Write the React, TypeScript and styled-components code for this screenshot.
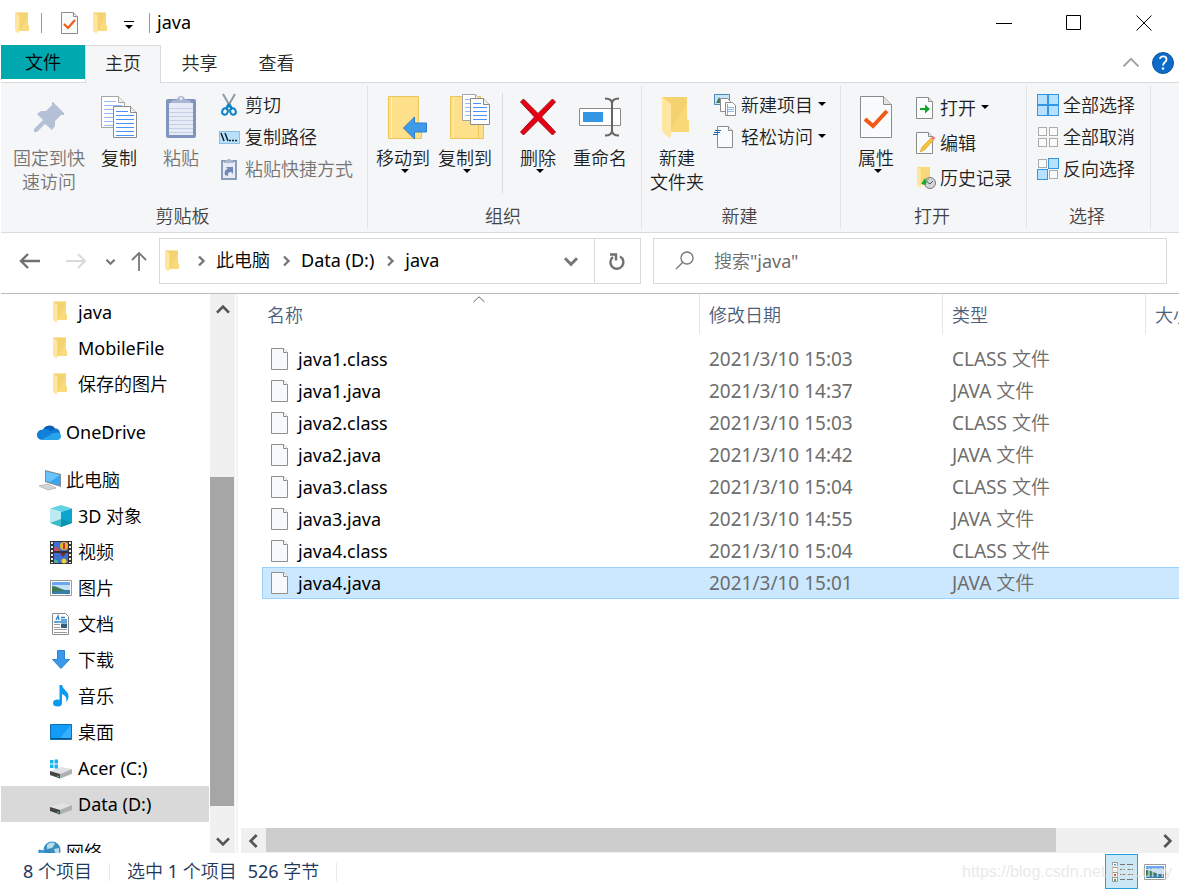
import React from "react";
import styled, { createGlobalStyle, css } from "styled-components";

const Global = createGlobalStyle`
  * { box-sizing: border-box; }
  body {
    margin: 0;
    background: #fff;
    color: #000;
    font: 400 18px/24px "Noto Sans", "Noto Sans CJK SC DemiLight", "Noto Sans CJK SC Light", "Noto Sans CJK SC", sans-serif;
  }
  button, input { font: inherit; color: inherit; }
  svg { display: block; flex: none; }
`;

const Window = styled.div`
  height: 100vh;
  display: flex;
  flex-direction: column;
  overflow: hidden;
  padding: 0 1px;
  position: relative;
`;

const PlainButton = styled.button`
  border: 0;
  padding: 0;
  margin: 0;
  background: none;
  display: flex;
  align-items: center;
  justify-content: center;
`;

/* ---------- title bar ---------- */
const TitleBar = styled.header`
  height: 45px;
  flex: none;
  display: flex;
  align-items: center;
  padding-left: 10px;
`;
const QuickButton = styled(PlainButton)<{ $w: number }>`
  width: ${(p) => p.$w}px;
  height: 32px;
`;
const TitleRule = styled.span<{ $left: number; $right: number }>`
  width: 1px;
  height: 20px;
  background: #9a9a9a;
  margin: 0 ${(p) => p.$right}px 0 ${(p) => p.$left}px;
`;
const Title = styled.h1`
  margin: 0;
  padding-bottom: 2px;
  flex: 1;
  font-size: 18px;
  line-height: 24px;
  font-weight: 400;
`;
const CaptionButton = styled(PlainButton)`
  width: 70px;
  height: 45px;
`;

/* ---------- tabs ---------- */
const TabBar = styled.nav`
  height: 38px;
  flex: none;
  display: flex;
  align-items: flex-start;
  border-bottom: 1px solid #dadbdc;
`;
const Tab = styled(PlainButton)<{ $kind?: "file" | "active" }>`
  width: 77px;
  height: 37px;
  padding-bottom: 2px;
  color: #262626;
  ${(p) =>
    p.$kind === "file" &&
    css`
      width: 84px;
      height: 34px;
      padding-bottom: 0;
      background: #00a8b0;
      color: #000;
    `}
  ${(p) =>
    p.$kind === "active" &&
    css`
      width: 76px;
      height: 38px;
      padding-bottom: 4px;
      background: #f5f6f7;
      border: 1px solid #dadbdc;
      border-bottom: 0;
    `}
`;
const TabSpace = styled.div`
  flex: 1;
`;
const TabIcon = styled(PlainButton)`
  width: 32px;
  height: 36px;
`;

/* ---------- ribbon ---------- */
const Ribbon = styled.section`
  height: 150px;
  flex: none;
  display: flex;
  background: #f5f6f7;
  border-bottom: 1px solid #dadbdc;
  padding: 3px 0;
`;
const Group = styled.div<{ $w: number }>`
  width: ${(p) => p.$w}px;
  flex: none;
  display: flex;
  flex-direction: column;
  justify-content: space-between;
  border-right: 1px solid #e2e3e4;
`;
const GroupBody = styled.div<{ $pad?: number }>`
  display: flex;
  align-items: flex-start;
  padding-left: ${(p) => p.$pad ?? 3}px;
`;
const GroupLabel = styled.div`
  text-align: center;
  color: #444;
  padding: 0 3px 1px 0;
`;
const BigButton = styled(PlainButton)<{ $w: number }>`
  width: ${(p) => p.$w}px;
  padding-top: 8px;
  flex-direction: column;
  justify-content: flex-start;
  color: #1e1e1e;
  white-space: nowrap;
  &:disabled { color: #757575; }
`;
const BigIcon = styled.span`
  height: 52px;
  padding-bottom: 6px;
  display: flex;
  align-items: center;
`;
const MenuMark = styled.span`
  padding-left: 4px;
  margin-top: -1px;
`;
const SmallList = styled.div<{ $left?: number; $top?: number }>`
  display: flex;
  flex-direction: column;
  align-items: flex-start;
  padding-top: ${(p) => p.$top ?? 3}px;
  margin-left: ${(p) => p.$left ?? 4}px;
`;
const SmallButton = styled(PlainButton)<{ $h?: number }>`
  height: ${(p) => p.$h ?? 32}px;
  gap: 4px;
  color: #1e1e1e;
  white-space: nowrap;
  &:disabled { color: #757575; }
`;
const Divider = styled.span`
  width: 1px;
  height: 100px;
  margin: 7px 6px 0;
  background: #dadbdc;
`;

/* ---------- address row ---------- */
const NavRow = styled.div`
  height: 61px;
  flex: none;
  display: grid;
  grid-template-columns: 157px 15fr 12px 16fr;
  padding: 5px 12px 9px 1px;
  border-bottom: 1px solid #bcbcbc;
`;
const NavButtons = styled.div`
  display: flex;
  align-items: center;
  padding-left: 8px;
`;
const NavButton = styled(PlainButton)<{ $w: number }>`
  width: ${(p) => p.$w}px;
  height: 46px;
`;
const Address = styled.div`
  display: flex;
  align-items: center;
  border: 1px solid #d9d9d9;
  height: 46px;
  padding-left: 1px;
`;
const Crumb = styled.a`
  color: #000;
  padding-bottom: 2px;
  text-decoration: none;
  white-space: nowrap;
`;
const CrumbGap = styled.span`
  width: 31px;
  display: flex;
  justify-content: center;
`;
const Stretch = styled.span`
  flex: 1;
`;
const BoxButton = styled(PlainButton)<{ $line?: boolean }>`
  width: 46px;
  height: 44px;
  border-left: ${(p) => (p.$line ? "1px solid #d9d9d9" : "0")};
`;
const SearchBox = styled.label`
  grid-column: 4;
  display: flex;
  align-items: center;
  border: 1px solid #d9d9d9;
  height: 46px;
  padding-left: 20px;
  gap: 18px;
`;
const SearchInput = styled.input`
  border: 0;
  outline: 0;
  padding: 0;
  flex: 1;
  min-width: 0;
  background: none;
  &::placeholder { color: #6d6d6d; opacity: 1; }
`;

/* ---------- body ---------- */
const Body = styled.div`
  flex: 1;
  min-height: 0;
  display: flex;
`;
const Sidebar = styled.nav`
  width: 208px;
  flex: none;
  overflow: hidden;
`;
const TreeGroup = styled.ul`
  list-style: none;
  margin: 0 0 12px;
  padding: 0;
`;
const TreeItem = styled.a<{ $level: number; $active?: boolean }>`
  height: 36px;
  display: flex;
  align-items: center;
  gap: 5px;
  padding-left: ${(p) => 24 + p.$level * 12}px;
  background: ${(p) => (p.$active ? "#d9d9d9" : "transparent")};
  color: #000;
  text-decoration: none;
  white-space: nowrap;
`;
const ScrollV = styled.div`
  width: 25px;
  margin-left: 1px;
  padding-top: 3px;
  flex: none;
  display: flex;
  flex-direction: column;
  background: #f0f0f0;
`;
const ScrollButton = styled(PlainButton)`
  width: 25px;
  height: 25px;
  flex: none;
`;
const TrackV = styled.div`
  flex: 1;
  display: flex;
  flex-direction: column;
  justify-content: flex-end;
  margin-bottom: 22px;
`;
const ThumbV = styled.div`
  height: 68%;
  width: 24px;
  background: #a6a6a6;
`;
const Main = styled.main`
  flex: 1;
  min-width: 0;
  display: flex;
  flex-direction: column;
  border-left: 2px solid #f4f4f4;
  margin-left: 1px;
`;
const ListArea = styled.div`
  flex: 1;
  overflow: hidden;
  padding-left: 24px;
`;
const FileTable = styled.table`
  table-layout: fixed;
  width: 1120px;
  border-collapse: separate;
  border-spacing: 0;
  th { font-weight: 400; text-align: left; }
  tbody::before { content: ""; display: block; height: 9px; }
`;
const HeadCell = styled.th`
  height: 40px;
  padding: 2px 0 0 9px;
  color: #4c607a;
  border-left: 1px solid #e5e5e5;
  position: relative;
  &:first-child { border-left: 0; padding-left: 5px; }
`;
const SortMark = styled.span`
  position: absolute;
  top: 2px;
  left: 211px;
`;
const FileRow = styled.tr<{ $selected?: boolean }>`
  ${(p) =>
    p.$selected &&
    css`
      background: #cce8ff;
      outline: 1px solid #99d1ff;
      outline-offset: -1px;
    `}
`;
const NameCell = styled.td`
  height: 32px;
  padding: 0 0 0 9px;
`;
const FileName = styled.span`
  display: flex;
  align-items: center;
  gap: 9px;
`;
const InfoCell = styled.td`
  height: 32px;
  padding: 0 0 0 10px;
  color: #6d6d6d;
  font-size: 19px;
`;
const ScrollH = styled.div`
  height: 25px;
  flex: none;
  margin-left: 3px;
  display: flex;
  background: #f0f0f0;
`;
const TrackH = styled.div`
  flex: 1;
`;
const ThumbH = styled.div`
  width: 89%;
  height: 24px;
  background: #cdcdcd;
`;

/* ---------- status bar ---------- */
const StatusBar = styled.footer`
  height: 37px;
  flex: none;
  display: flex;
  align-items: center;
  padding-left: 22px;
  padding-right: 8px;
  color: #1e395b;
`;
const StatusRule = styled.span`
  width: 1px;
  height: 18px;
  margin: 0 17px;
  background: #e8e8e8;
`;
const StatusText = styled.span<{ $gap?: number }>`
  margin-right: ${(p) => p.$gap ?? 0}px;
  padding-bottom: 2px;
`;
const ViewButton = styled(PlainButton)<{ $active?: boolean }>`
  width: 33px;
  height: 35px;
  border: 1px solid ${(p) => (p.$active ? "#26a0da" : "transparent")};
  background: ${(p) => (p.$active ? "#cbe8f6" : "none")};
`;
const Watermark = styled.span`
  position: absolute;
  right: 8px;
  bottom: 8px;
  font: 16px/20px "Liberation Sans", Arial, sans-serif;
  color: rgba(228, 228, 228, 0.8);
  pointer-events: none;
`;

/* ---------- drawings ---------- */
const Folder = () => (
  <svg width="24" height="24" viewBox="0 0 24 24">
    <path d="M4 1.500h13v12l1 1.500v5H8z" fill="#f9da7c" />
    <path d="M5 1.500h12v2L9 20H8z" fill="#eecb68" opacity=".5" />
    <path d="M4 1.500l4.500 3v16.500L7 22.500l-3-3z" fill="#ffe69b" />
  </svg>
);
const Down = () => (
  <svg width="8" height="4" viewBox="0 0 8 4"><path d="M0 0h8L4 4z" fill="#000" /></svg>
);
const DownSmall = () => (
  <svg width="12" height="12" viewBox="0 0 12 12"><path d="M1 3h8L5 7z" fill="#000" /></svg>
);
const Page = ({ children }: { children?: React.ReactNode }) => (
  <svg width="22" height="24" viewBox="0 0 22 24">
    <path d="M2.500 1.500h12l4 4v17h-16z" fill="#fafbfc" stroke="#8c8c8c" />
    <path d="M14.500 1.500v4h4" fill="#e8e8e8" stroke="#8c8c8c" />
    {children}
  </svg>
);
const FilePage = () => (
  <svg width="18" height="22" viewBox="0 0 18 22">
    <path d="M.5.500h12l4 4v17H.5z" fill="#f8f9fa" stroke="#8f8f8f" />
    <path d="M12.500.500v4h4" fill="#fff" stroke="#8f8f8f" />
  </svg>
);
const Chevron = ({ dir = "right", size = 12, color = "#555", sw = 2 }: { dir?: string; size?: number; color?: string; sw?: number }) => {
  const d: Record<string, string> = {
    right: "M4 1.500l4.500 4.500L4 10.500",
    left: "M8 1.500L3.500 6L8 10.500",
    down: "M1.500 4L6 8.500L10.500 4",
    up: "M1.500 8L6 3.500L10.500 8",
  };
  return (
    <svg width={size} height={size} viewBox="0 0 12 12">
      <path d={d[dir]} fill="none" stroke={color} strokeWidth={sw} />
    </svg>
  );
};
const Pin = () => (
  <svg width="32" height="34" viewBox="0 0 32 34">
    <path d="M20 2l11 11v2h-3l-6 6v5l-3 4-7-6L4 32H1v-3l9-9-6-6 4-3h5l6-6V2z" fill="#b3c0d6" />
  </svg>
);
const lines = (x: number, y: number, w: number, n: number, step = 4) =>
  Array.from({ length: n }, (_, i) => <path key={i} d={`M${x} ${y + i * step}h${w}`} stroke="#4a90ff" />);
const Sheet = ({ x, y, w, h, faint }: { x: number; y: number; w: number; h: number; faint?: boolean }) => (
  <g transform={`translate(${x} ${y})`}>
    <path d={`M.5.500h${w - 7}l6 6v${h - 7}H.5z`} fill="#fff" stroke={faint ? "#a5a5a5" : "#8a8a8a"} />
    <path d={`M${w - 6.5}.500v6h6`} fill="#eee" stroke={faint ? "#a5a5a5" : "#8a8a8a"} />
    <g opacity={faint ? 0.6 : 1}>
      {lines(3, 5.5, w - 12, 1)}
      {lines(3, 9.5, w - 6, Math.floor((h - 12) / 4) + 1)}
    </g>
  </g>
);
const Copy = () => (
  <svg width="38" height="44" viewBox="0 0 38 44">
    <Sheet x={1} y={1} w={24} h={32} faint />
    <Sheet x={13} y={11} w={24} h={32} />
  </svg>
);
const Paste = () => (
  <svg width="32" height="44" viewBox="0 0 32 44">
    <rect x="1" y="4" width="30" height="39" rx="2" fill="#8094bd" />
    <path d="M4 8h24v32H4z" fill="#e6ebf6" />
    {Array.from({ length: 7 }, (_, i) => <path key={i} d={`M4 ${13.5 + i * 4}h24`} stroke="#c5cfe5" />)}
    <path d="M6 8c0-4 5-2 6-4 1-4 7-4 8 0 1 2 6 0 6 4z" fill="#a9b7d3" />
    <circle cx="16" cy="3.500" r="1.500" fill="#e6ebf6" />
  </svg>
);
const Scissors = () => (
  <svg width="22" height="24" viewBox="0 0 22 24">
    <path d="M4 1l8 14M16 1L8 15" stroke="#8e9aa6" strokeWidth="2" />
    <path d="M10 11l-3 5M10 11l3 5" stroke="#0d84c9" strokeWidth="2.500" />
    <ellipse cx="6" cy="18.500" rx="2.800" ry="3.200" fill="none" stroke="#0d84c9" strokeWidth="2" transform="rotate(20 6 18.500)" />
    <ellipse cx="14" cy="18.500" rx="2.800" ry="3.200" fill="none" stroke="#0d84c9" strokeWidth="2" transform="rotate(-20 14 18.500)" />
  </svg>
);
const PathIcon = () => (
  <svg width="22" height="24" viewBox="0 0 22 24">
    <rect x=".5" y="6.500" width="20" height="12" fill="#b9e0fb" stroke="#8cbfe6" />
    <path d="M2 8l3 8M6 8l3 8" stroke="#123" strokeWidth="1.500" />
    <path d="M10 15.500h2M13 15.500h2M16 15.500h2" stroke="#123" strokeWidth="1.500" />
  </svg>
);
const PasteLink = () => (
  <svg width="22" height="24" viewBox="0 0 22 24">
    <rect x="3" y="4" width="14" height="18" fill="#e6ebf6" stroke="#8c9cbd" strokeWidth="2" />
    <path d="M5 6c0-3 3-2 4-4h2c1 2 4 1 4 4z" fill="#a9b7d3" />
    <path d="M6 18c-1-4 1-6 3-6l-2-2h7v7l-2-2c-3 0-3 2-3 4z" fill="#7288b5" />
  </svg>
);
const FolderBase = ({ children }: { children: React.ReactNode }) => (
  <svg width="52" height="46" viewBox="-10 0 52 46">
    <path d="M1.500 2.500h30v25l3 3v14h-33z" fill="#ffe08a" stroke="#e9c55b" />
    <path d="M4.500 3v41" stroke="#fff0bd" />
    {children}
  </svg>
);
const MoveTo = () => (
  <FolderBase>
    <path d="M16.500 34l11-11v6h12v9h-12v7z" fill="#3f9be8" stroke="#2b7fc9" />
  </FolderBase>
);
const CopyTo = () => (
  <FolderBase>
    <path d="M29.500 31v13" stroke="#e9c55b" />
    <Sheet x={13} y={0} w={20} h={27} faint />
    <Sheet x={21} y={4} w={20} h={27} />
  </FolderBase>
);
const Delete = () => (
  <svg width="38" height="40" viewBox="0 0 38 40">
    <path d="M1.500 5l3-3L19 16.500 33.500 2l3 3-14 15 14 15-3 3L19 23.500 4.500 38l-3-3 14-15z" fill="#e60012" stroke="#a01020" />
  </svg>
);
const Rename = () => (
  <svg width="44" height="40" viewBox="0 0 44 40">
    <path d="M1.500 11.500h41v17h-41z" fill="#fff" stroke="#8c8c8c" />
    <path d="M5 15h20v10H5z" fill="#3397e6" />
    <path d="M27 1.500c4 0 7 1 7 5v27c0 4-3 5-7 5M41 1.500c-4 0-7 1-7 5v27c0 4 3 5 7 5" fill="none" stroke="#666" strokeWidth="2" />
  </svg>
);
const BigFolder = () => (
  <svg width="36" height="46" viewBox="0 0 36 46">
    <path d="M3 3h25v22l2 2v11H11z" fill="#f9d877" />
    <path d="M3 3h25v6L11 38V9z" fill="#f1ce6c" opacity=".6" />
    <path d="M3 3l9 7v32l-2 2-7-7z" fill="#ffe6a0" />
  </svg>
);
const NewItem = () => (
  <svg width="24" height="24" viewBox="0 0 24 24">
    <path d="M1.500 1.500h15v10h-15z" fill="#c6e6f7" stroke="#4a8bb5" />
    <path d="M3 10l3-6 3 6z" fill="#4c7a55" />
    <path d="M7.500 5.500h7l3 3v10h-10z" fill="#fff" stroke="#8c8c8c" />
    <path d="M12.500 9.500h7l3 3v10h-10z" fill="#fff" stroke="#8c8c8c" />
    <path d="M15 14.500h6M15 16.500h6M15 18.500h6" stroke="#8fb6e8" />
    <path d="M14.500 11v11" stroke="#e08a8a" />
  </svg>
);
const EasyAccess = () => (
  <svg width="24" height="24" viewBox="0 0 24 24">
    <path d="M4.500 1.500h11l4 4v17h-15z" fill="#fafbfc" stroke="#8c8c8c" />
    <path d="M15.500 1.500v4h4" fill="#eee" stroke="#8c8c8c" />
    <path d="M2 5.500h6M1 7.500h6M0 9.500h5" stroke="#1a66b0" />
  </svg>
);
const Properties = () => (
  <svg width="34" height="44" viewBox="0 0 34 44">
    <path d="M1.500 1.500h23l8 8v33h-31z" fill="#fafbfc" stroke="#8c8c8c" />
    <path d="M24.500 1.500v8h8" fill="#e4e4e4" stroke="#8c8c8c" />
    <path d="M6 24l8 7 14-15" fill="none" stroke="#f05a14" strokeWidth="4" />
  </svg>
);
const Check = () => <path d="M5 13l4 4 7-8" fill="none" stroke="#f05a14" strokeWidth="2.200" />;
const Open = () => (
  <Page><path d="M6 12h5V8.500l5 4.500-5 4.500V14H6z" fill="#12a52c" /></Page>
);
const Edit = () => (
  <Page>
    <path d="M6 21l2-5 9-9 2.500 2-9 10z" fill="#f6c13b" stroke="#d79b22" strokeWidth=".6" />
    <path d="M17 7l2-2 2.500 2-2 2z" fill="#e87a80" />
  </Page>
);
const History = () => (
  <svg width="22" height="24" viewBox="0 0 22 24">
    <path d="M3 1h13v18H8z" fill="#f9d877" />
    <path d="M3 1l4 3v18l-4-3z" fill="#ffe69b" />
    <circle cx="16" cy="17" r="5.500" fill="#d5d8da" stroke="#777" />
    <path d="M13 16l3 2 3-3" fill="none" stroke="#555" />
    <path d="M7 18l4-6 1 3c2-2 3-2 4-2-3 1-4 3-4 6z" fill="#1fa83a" />
  </svg>
);
const Squares = ({ on }: { on: boolean[] }) => (
  <svg width="22" height="22" viewBox="0 0 22 22">
    {on.map((a, i) => (
      <rect
        key={i}
        x={(i % 2) * 11 + (a ? 0.5 : 1.5)}
        y={Math.floor(i / 2) * 11 + (a ? 0.5 : 1.5)}
        width={a ? 10 : 8}
        height={a ? 10 : 8}
        fill={a ? "#b5e0ff" : "#fafafa"}
        stroke={a ? "#3397e6" : "#ababab"}
      />
    ))}
  </svg>
);
const Arrow = ({ d, color, sw = 2 }: { d: string; color: string; sw?: number }) => (
  <svg width="22" height="22" viewBox="0 0 22 22">
    <path d={d} fill="none" stroke={color} strokeWidth={sw} />
  </svg>
);
const Refresh = () => (
  <svg width="20" height="20" viewBox="0 0 20 20">
    <path d="M13 5.500A6.500 6.500 0 1 1 6 6" fill="none" stroke="#707070" strokeWidth="2.400" />
    <path d="M3 3.500h6v6" fill="none" stroke="#707070" strokeWidth="2.400" />
  </svg>
);
const SearchIcon = () => (
  <svg width="22" height="22" viewBox="0 0 22 22">
    <circle cx="13" cy="8" r="6" fill="none" stroke="#777" strokeWidth="1.300" />
    <path d="M8.800 12.200L2 19" stroke="#777" strokeWidth="1.300" />
  </svg>
);
const OneDrive = () => (
  <svg width="24" height="24" viewBox="0 0 24 24">
    <path d="M6 10a7 7 0 0 1 12.500-1L13 15z" fill="#0a62b8" />
    <path d="M5 20a5 5 0 0 1 0-10.200c3-1.300 6-.8 8 1.200l5 9z" fill="#1180d8" />
    <path d="M18 8.500c3 0 5 2 5 5l-4 2-7-3z" fill="#0f78d0" />
    <path d="M4 19.800L15 14c2-1 3-1.500 5-1.500 2.500 0 4 1.500 4 3.500 0 2.500-1.500 4-4 4H5z" fill="#28a4ec" />
  </svg>
);
const Computer = () => (
  <svg width="24" height="24" viewBox="0 0 24 24">
    <path d="M8 2l16 4v13L8 14z" fill="#7f8b95" />
    <path d="M9 3.500l14 3.500v10.500L9 13z" fill="#35a7f5" />
    <path d="M9 3.500l14 3.500-10 7-4-1z" fill="#6cc2fa" />
    <path d="M2 18l9-2 8 4-8 2z" fill="#d3d7da" stroke="#a5abb0" strokeWidth=".7" />
  </svg>
);
const Cube = () => (
  <svg width="24" height="24" viewBox="0 0 24 24">
    <path d="M1 4.500l11-3.500 11 3.500L12 8z" fill="#63d3e4" />
    <path d="M1 4.500L12 8v15L1 19z" fill="#bdeaf0" />
    <path d="M23 4.500L12 8v15l11-4z" fill="#0ba5cf" />
    <path d="M12 15L1 19l11 4z" fill="#3dbccb" />
    <path d="M12 15l11 4-11 4z" fill="#0c94aa" />
  </svg>
);
const Film = () => (
  <svg width="24" height="24" viewBox="0 0 24 24">
    <path d="M1 1h22v23H1z" fill="#333" />
    <path d="M5 2h14v9H5zM5 13h14v10H5z" fill="#3f6fd0" />
    <path d="M3 2v21M21 2v21" stroke="#eee" strokeWidth="2" strokeDasharray="2 2" />
    <circle cx="15" cy="6" r="4" fill="#e8b52a" />
    <path d="M14 3h2v6h-2z" fill="#c9302c" />
    <path d="M6 6l4 3v2H5z" fill="#d84a56" />
    <path d="M11 13h6l-3 4z" fill="#7a2a2e" />
    <circle cx="15" cy="21" r="2.500" fill="#f0d030" />
    <path d="M5 19l4 2v2H5z" fill="#4fb08a" />
  </svg>
);
const Picture = () => (
  <svg width="24" height="24" viewBox="0 0 24 24">
    <path d="M1.500 4.500h21v15h-21z" fill="#fff" stroke="#9a9a9a" />
    <path d="M3 6h18v5H3z" fill="#6ba6f0" />
    <path d="M3 9h18v5H3z" fill="#c3e0f8" />
    <path d="M3 14h18v4H3z" fill="#3b7fae" />
    <path d="M3 10c5 0 8 3 15 4.500L3 16z" fill="#3d7a58" />
  </svg>
);
const Doc = () => (
  <svg width="24" height="24" viewBox="0 0 24 24">
    <path d="M3.500 1.500h13l3 3v18h-16z" fill="#fff" stroke="#8c8c8c" />
    <path d="M7 8l2-4 1 4M12 5.500h4M12 8h6M5 10h13" fill="none" stroke="#2b86cf" strokeWidth="1.400" />
    <path d="M5 12.500h6M5 15.500h6M5 17.500h13M5 20.500h13" stroke="#9a9a9a" />
    <path d="M12 11.500h6V16h-6z" fill="#2f5f7f" />
  </svg>
);
const Download = () => (
  <svg width="24" height="24" viewBox="0 0 24 24">
    <path d="M8.500 2.500h7v9h5L12 20.500 3.500 11.500h5z" fill="#3b98ea" stroke="#2c82cf" />
  </svg>
);
const Music = () => (
  <svg width="24" height="24" viewBox="0 0 24 24">
    <ellipse cx="8.500" cy="19" rx="4.500" ry="3.500" fill="#0a9bf2" />
    <path d="M10.500 1h2.500c1 5 7 6 6.500 12-.5 3-1.500 4-2.500 5 1-4 0-6-4-8v9h-2.500z" fill="#0a9bf2" />
  </svg>
);
const Desktop = () => (
  <svg width="24" height="24" viewBox="0 0 24 24">
    <path d="M1.500 4.500h21v15h-21z" fill="#129cf8" stroke="#0d6fb5" />
    <path d="M11 18L22 5v13z" fill="#35aefc" />
    <path d="M2 18.500h20" stroke="#0b5688" />
  </svg>
);
const Drive = ({ win }: { win?: boolean }) => (
  <svg width="24" height="24" viewBox="0 0 24 24">
    <path d="M1 15l11-4 11 2-12 5z" fill="#e0e2e3" />
    <path d="M1 15l10 3v4.500L1 19z" fill="#444" />
    <path d="M11 18l12-5v5l-12 4.500z" fill="#aeb1b4" />
    <path d="M8 20l2 .6" stroke="#4cd35c" />
    {win && <path d="M1 4h3.500v3.500H1zM5.500 3.500H9v4H5.500zM1 8.500h3.500V12H1zM5.500 8.500H9v4H5.500z" fill="#19b4ee" />}
  </svg>
);
const Network = () => (
  <svg width="24" height="24" viewBox="0 0 24 24">
    <circle cx="15" cy="10" r="8.500" fill="#3b8fc0" />
    <path d="M10 5c3-3 6-3 8-1l-3 4-5 1zM17 9l5-1v5l-3 2z" fill="#b7dcea" />
    <path d="M2 10l12 3v10L2 19z" fill="#36a5ee" stroke="#2a80bb" />
  </svg>
);
const Details = () => (
  <svg width="24" height="24" viewBox="0 0 24 24">
    <path d="M2.500 2.500h5v19h-5zM2.500 7.500h5M2.500 12.500h5M2.500 17.500h5" fill="#fff" stroke="#999" />
    <path d="M10 4.500h5M17 4.500h6M10 9.500h5M17 9.500h6M10 14.500h5M17 14.500h6M10 19.500h5M17 19.500h6" stroke="#777" />
    <path d="M4 4h2v2H4z" fill="#4b90d0" />
    <path d="M4 14h2v2H4z" fill="#d04040" />
    <path d="M4 19h2v2H4z" fill="#50a050" />
  </svg>
);

const files = [
  ["java1.class", "2021/3/10 15:03", "CLASS 文件"],
  ["java1.java", "2021/3/10 14:37", "JAVA 文件"],
  ["java2.class", "2021/3/10 15:03", "CLASS 文件"],
  ["java2.java", "2021/3/10 14:42", "JAVA 文件"],
  ["java3.class", "2021/3/10 15:04", "CLASS 文件"],
  ["java3.java", "2021/3/10 14:55", "JAVA 文件"],
  ["java4.class", "2021/3/10 15:04", "CLASS 文件"],
  ["java4.java", "2021/3/10 15:01", "JAVA 文件"],
];

type Node = { icon: React.ReactNode; label: string; level: number; active?: boolean };
const tree: Node[][] = [
  [
    { icon: <Folder />, label: "java", level: 2 },
    { icon: <Folder />, label: "MobileFile", level: 2 },
    { icon: <Folder />, label: "保存的图片", level: 2 },
  ],
  [{ icon: <OneDrive />, label: "OneDrive", level: 1 }],
  [
    { icon: <Computer />, label: "此电脑", level: 1 },
    { icon: <Cube />, label: "3D 对象", level: 2 },
    { icon: <Film />, label: "视频", level: 2 },
    { icon: <Picture />, label: "图片", level: 2 },
    { icon: <Doc />, label: "文档", level: 2 },
    { icon: <Download />, label: "下载", level: 2 },
    { icon: <Music />, label: "音乐", level: 2 },
    { icon: <Desktop />, label: "桌面", level: 2 },
    { icon: <Drive win />, label: "Acer (C:)", level: 2 },
    { icon: <Drive />, label: "Data (D:)", level: 2, active: true },
  ],
  [{ icon: <Network />, label: "网络", level: 1 }],
];

type BigProps = { icon: React.ReactNode; lines: string[]; w?: number; menu?: boolean; disabled?: boolean };
const Big = ({ icon, lines: text, w = 62, menu, disabled }: BigProps) => (
  <BigButton $w={w} disabled={disabled}>
    <BigIcon>{icon}</BigIcon>
    {text.map((t) => <span key={t}>{t}</span>)}
    {menu && <MenuMark><Down /></MenuMark>}
  </BigButton>
);
type SmallProps = { icon: React.ReactNode; text: string; h?: number; menu?: boolean; disabled?: boolean };
const Small = ({ icon, text, h, menu, disabled }: SmallProps) => (
  <SmallButton $h={h} disabled={disabled}>
    {icon}
    <span>{text}</span>
    {menu && <DownSmall />}
  </SmallButton>
);

export default function App() {
  return (
    <Window>
      <Global />
      <TitleBar>
        <Folder />
        <TitleRule $left={6} $right={16} />
        <QuickButton $w={24} aria-label="属性"><Page><Check /></Page></QuickButton>
        <QuickButton $w={38} aria-label="新建文件夹"><Folder /></QuickButton>
        <QuickButton $w={18} aria-label="自定义快速访问工具栏">
          <svg width="10" height="12" viewBox="0 0 10 12">
            <path d="M0 4.500h10" stroke="#000" />
            <path d="M1 8h8L5 12z" fill="#000" />
          </svg>
        </QuickButton>
        <TitleRule $left={11} $right={7} />
        <Title>java</Title>
        <CaptionButton aria-label="最小化">
          <svg width="16" height="16"><path d="M0 8.500h16" stroke="#000" /></svg>
        </CaptionButton>
        <CaptionButton aria-label="最大化">
          <svg width="16" height="16"><path d="M.5.500h14v14H.5z" fill="none" stroke="#000" /></svg>
        </CaptionButton>
        <CaptionButton aria-label="关闭">
          <svg width="16" height="16"><path d="M.5.500l15 15M15.500.500l-15 15" stroke="#000" /></svg>
        </CaptionButton>
      </TitleBar>

      <TabBar>
        <Tab $kind="file">文件</Tab>
        <Tab $kind="active">主页</Tab>
        <Tab>共享</Tab>
        <Tab>查看</Tab>
        <TabSpace />
        <TabIcon aria-label="收起功能区"><Chevron dir="up" size={20} color="#a0a0a0" sw={1.2} /></TabIcon>
        <TabIcon aria-label="帮助">
          <svg width="22" height="22" viewBox="0 0 22 22">
            <circle cx="11" cy="11" r="10.500" fill="#0b6bc9" stroke="#0a55a0" />
            <path d="M8 7c0-3.500 6.500-3.500 6.500.5 0 2.500-3.500 3-3.500 6" fill="none" stroke="#fff" strokeWidth="1.800" />
            <circle cx="11" cy="16.500" r="1.200" fill="#fff" />
          </svg>
        </TabIcon>
      </TabBar>

      <Ribbon>
        <Group $w={367}>
          <GroupBody $pad={9}>
            <Big icon={<Pin />} lines={["固定到快", "速访问"]} w={78} disabled />
            <Big icon={<Copy />} lines={["复制"]} />
            <Big icon={<Paste />} lines={["粘贴"]} disabled />
            <SmallList $left={7}>
              <Small icon={<Scissors />} text="剪切" />
              <Small icon={<PathIcon />} text="复制路径" />
              <Small icon={<PasteLink />} text="粘贴快捷方式" disabled />
            </SmallList>
          </GroupBody>
          <GroupLabel>剪贴板</GroupLabel>
        </Group>
        <Group $w={274}>
          <GroupBody $pad={4}>
            <Big icon={<MoveTo />} lines={["移动到"]} menu />
            <Big icon={<CopyTo />} lines={["复制到"]} menu />
            <Divider />
            <Big icon={<Delete />} lines={["删除"]} w={58} menu />
            <Big icon={<Rename />} lines={["重命名"]} w={66} />
          </GroupBody>
          <GroupLabel>组织</GroupLabel>
        </Group>
        <Group $w={199}>
          <GroupBody>
            <Big icon={<BigFolder />} lines={["新建", "文件夹"]} w={64} />
            <SmallList>
              <Small icon={<NewItem />} text="新建项目" menu />
              <Small icon={<EasyAccess />} text="轻松访问" menu />
            </SmallList>
          </GroupBody>
          <GroupLabel>新建</GroupLabel>
        </Group>
        <Group $w={186}>
          <GroupBody>
            <Big icon={<Properties />} lines={["属性"]} w={64} menu />
            <SmallList $left={6} $top={4}>
              <Small icon={<Open />} text="打开" h={35} menu />
              <Small icon={<Edit />} text="编辑" h={35} />
              <Small icon={<History />} text="历史记录" h={35} />
            </SmallList>
          </GroupBody>
          <GroupLabel>打开</GroupLabel>
        </Group>
        <Group $w={124}>
          <GroupBody>
            <SmallList $left={7}>
              <Small icon={<Squares on={[true, true, true, true]} />} text="全部选择" />
              <Small icon={<Squares on={[false, false, false, false]} />} text="全部取消" />
              <Small icon={<Squares on={[false, true, true, false]} />} text="反向选择" />
            </SmallList>
          </GroupBody>
          <GroupLabel>选择</GroupLabel>
        </Group>
      </Ribbon>

      <NavRow>
        <NavButtons>
          <NavButton $w={40} aria-label="后退"><Arrow d="M21 11H2M9 4l-7 7 7 7" color="#707070" sw={2.4} /></NavButton>
          <NavButton $w={52} aria-label="前进"><Arrow d="M1 11h19M13 4l7 7-7 7" color="#d9d9d9" /></NavButton>
          <NavButton $w={16} aria-label="最近浏览的位置"><Chevron dir="down" size={11} color="#777" sw={2.4} /></NavButton>
          <NavButton $w={41} aria-label="上移"><Arrow d="M11 21V3M4 10l7-7 7 7" color="#777" sw={1.8} /></NavButton>
        </NavButtons>
        <Address>
          <Folder />
          <CrumbGap><Chevron size={12} color="#777" sw={2.4} /></CrumbGap>
          <Crumb href="#pc">此电脑</Crumb>
          <CrumbGap><Chevron size={12} color="#777" sw={2.4} /></CrumbGap>
          <Crumb href="#data">Data (D:)</Crumb>
          <CrumbGap><Chevron size={12} color="#777" sw={2.4} /></CrumbGap>
          <Crumb href="#java">java</Crumb>
          <Stretch />
          <BoxButton aria-label="以前的位置"><Chevron dir="down" size={16} color="#777" sw={2.2} /></BoxButton>
          <BoxButton $line aria-label="刷新"><Refresh /></BoxButton>
        </Address>
        <SearchBox>
          <SearchIcon />
          <SearchInput type="text" aria-label="搜索" placeholder={'搜索"java"'} />
        </SearchBox>
      </NavRow>

      <Body>
        <Sidebar>
          {tree.map((group, i) => (
            <TreeGroup key={i}>
              {group.map((n) => (
                <li key={n.label}>
                  <TreeItem href="#node" $level={n.level} $active={n.active}>
                    {n.icon}
                    <span>{n.label}</span>
                  </TreeItem>
                </li>
              ))}
            </TreeGroup>
          ))}
        </Sidebar>
        <ScrollV>
          <ScrollButton aria-label="向上滚动"><Chevron dir="up" size={16} /></ScrollButton>
          <TrackV><ThumbV /></TrackV>
          <ScrollButton aria-label="向下滚动"><Chevron dir="down" size={16} /></ScrollButton>
        </ScrollV>
        <Main>
          <ListArea>
            <FileTable>
              <colgroup>
                <col style={{ width: 437 }} />
                <col style={{ width: 243 }} />
                <col style={{ width: 203 }} />
                <col />
              </colgroup>
              <thead>
                <tr>
                  <HeadCell>
                    名称
                    <SortMark>
                      <svg width="12" height="7"><path d="M.5 6L6 .8 11.500 6" fill="none" stroke="#666" /></svg>
                    </SortMark>
                  </HeadCell>
                  <HeadCell>修改日期</HeadCell>
                  <HeadCell>类型</HeadCell>
                  <HeadCell>大小</HeadCell>
                </tr>
              </thead>
              <tbody>
                {files.map(([name, date, type], i) => (
                  <FileRow key={name} $selected={i === files.length - 1}>
                    <NameCell><FileName><FilePage />{name}</FileName></NameCell>
                    <InfoCell>{date}</InfoCell>
                    <InfoCell>{type}</InfoCell>
                    <InfoCell />
                  </FileRow>
                ))}
              </tbody>
            </FileTable>
          </ListArea>
          <ScrollH>
            <ScrollButton aria-label="向左滚动"><Chevron dir="left" size={16} /></ScrollButton>
            <TrackH><ThumbH /></TrackH>
            <ScrollButton aria-label="向右滚动"><Chevron dir="right" size={16} /></ScrollButton>
          </ScrollH>
        </Main>
      </Body>

      <StatusBar>
        <StatusText>8 个项目</StatusText>
        <StatusRule />
        <StatusText $gap={11}>选中 1 个项目</StatusText>
        <StatusText>526 字节</StatusText>
        <StatusRule />
        <Stretch />
        <ViewButton $active aria-label="详细信息"><Details /></ViewButton>
        <ViewButton aria-label="大图标"><Picture /></ViewButton>
      </StatusBar>
      <Watermark>https://blog.csdn.net/BaiLumy</Watermark>
    </Window>
  );
}
